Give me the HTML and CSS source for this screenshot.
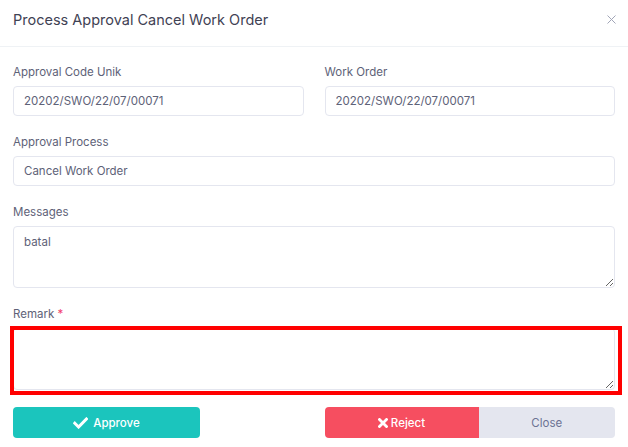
FILE: index.html
```html
<!DOCTYPE html>
<html>
<head>
<meta charset="utf-8">
<link rel="stylesheet" href="styles.css">
</head>
<body>
<div class="modal">
  <div class="modal-header">
    <h5 class="modal-title">Process Approval Cancel Work Order</h5>
    <button class="btn-close" aria-label="Close">
      <svg width="9" height="9" viewBox="0 0 9 9"><path d="M0.5 0.5 L8.5 8.5 M8.5 0.5 L0.5 8.5" stroke="#a1a5b7" stroke-width="1" fill="none"/></svg>
    </button>
  </div>
  <div class="modal-body">
    <div class="grid">
      <div class="field">
        <label class="label">Approval Code Unik</label>
        <input class="control" type="text" value="20202/SWO/22/07/00071" readonly>
      </div>
      <div class="field">
        <label class="label">Work Order</label>
        <input class="control" type="text" value="20202/SWO/22/07/00071" readonly>
      </div>
      <div class="field span">
        <label class="label">Approval Process</label>
        <input class="control" type="text" value="Cancel Work Order" readonly>
      </div>
      <div class="field span">
        <label class="label">Messages</label>
        <textarea class="control area" readonly>batal</textarea>
      </div>
      <div class="field span remark">
        <label class="label">Remark <span class="req">*</span></label>
        <textarea class="control area"></textarea>
        <span class="highlight"></span>
      </div>
      <div class="actions-left">
        <button class="btn btn-approve">
          <svg width="15" height="12" viewBox="0 0 15 12"><path d="M1.8 6.2 L5.6 10 L13.4 2" stroke="#fff" stroke-width="3" fill="none" stroke-linecap="square"/></svg>
          Approve
        </button>
      </div>
      <div class="actions-right">
        <button class="btn btn-reject">
          <svg width="10" height="10" viewBox="0 0 10 10"><path d="M1.5 1.5 L8.5 8.5 M8.5 1.5 L1.5 8.5" stroke="#fff" stroke-width="2.8" fill="none" stroke-linecap="square"/></svg>
          Reject
        </button>
        <button class="btn btn-close-light">Close</button>
      </div>
    </div>
  </div>
</div>
</body>
</html>
```
FILE: styles.css
```css
* { box-sizing: border-box; }
html, body { margin: 0; padding: 0; background: #fff; }
body { font-family: Inter, "Noto Sans", sans-serif; color: #3f4254; }
.modal { width: 628px; height: 447px; background: #fff; }
.modal-header {
  height: 47px;
  border-bottom: 1px solid #eff2f5;
  display: flex;
  justify-content: space-between;
  align-items: flex-start;
  padding: 10px 12px 0 13px;
}
.modal-title { margin: 0; font-size: 14.5px; line-height: 20px; font-weight: 400; color: #3f4254; }
.btn-close { background: none; border: 0; padding: 0; margin-top: 5px; width: 9px; height: 9px; display: flex; }
.modal-body { padding: 16px 13px 0 13px; }
.grid { display: grid; grid-template-columns: 1fr 1fr; column-gap: 21px; row-gap: 17px; }
.field { display: flex; flex-direction: column; }
.span { grid-column: 1 / 3; }
.label { font-size: 11.5px; line-height: 18px; color: #5e6278; margin-bottom: 5px; }
.req { color: #f1416c; }
.control {
  font-family: inherit;
  font-size: 11.5px;
  color: #5e6278;
  border: 1px solid #e4e6ef;
  border-radius: 4px;
  height: 30px;
  padding: 0 10px;
  background: #fff;
  outline: none;
  width: 100%;
}
.area { height: 62px; padding: 7px 10px; resize: vertical; line-height: 16px; }
.remark { position: relative; }
.highlight {
  position: absolute;
  left: -3px; right: -7px; top: 21px; bottom: -5px;
  border: 4px solid #ff0000;
  pointer-events: none;
}
.actions-left { display: flex; margin-top: 0; }
.actions-right { display: flex; margin-top: 0; }
.btn {
  height: 31px;
  border: 0;
  font-family: inherit;
  font-size: 11.5px;
  font-weight: 500;
  display: flex;
  align-items: center;
  justify-content: center;
  gap: 5px;
  padding: 0;
}
.btn-approve { width: 187px; background: #1bc5bd; color: #fff; border-radius: 4px; }
.btn-reject { width: 154px; background: #f64e60; color: #fff; border-radius: 4px 0 0 4px; gap: 3px; }
.btn-close-light { flex: 1; background: #e4e6ef; color: #6c7293; border-radius: 0 4px 4px 0; font-weight: 400; }
```
